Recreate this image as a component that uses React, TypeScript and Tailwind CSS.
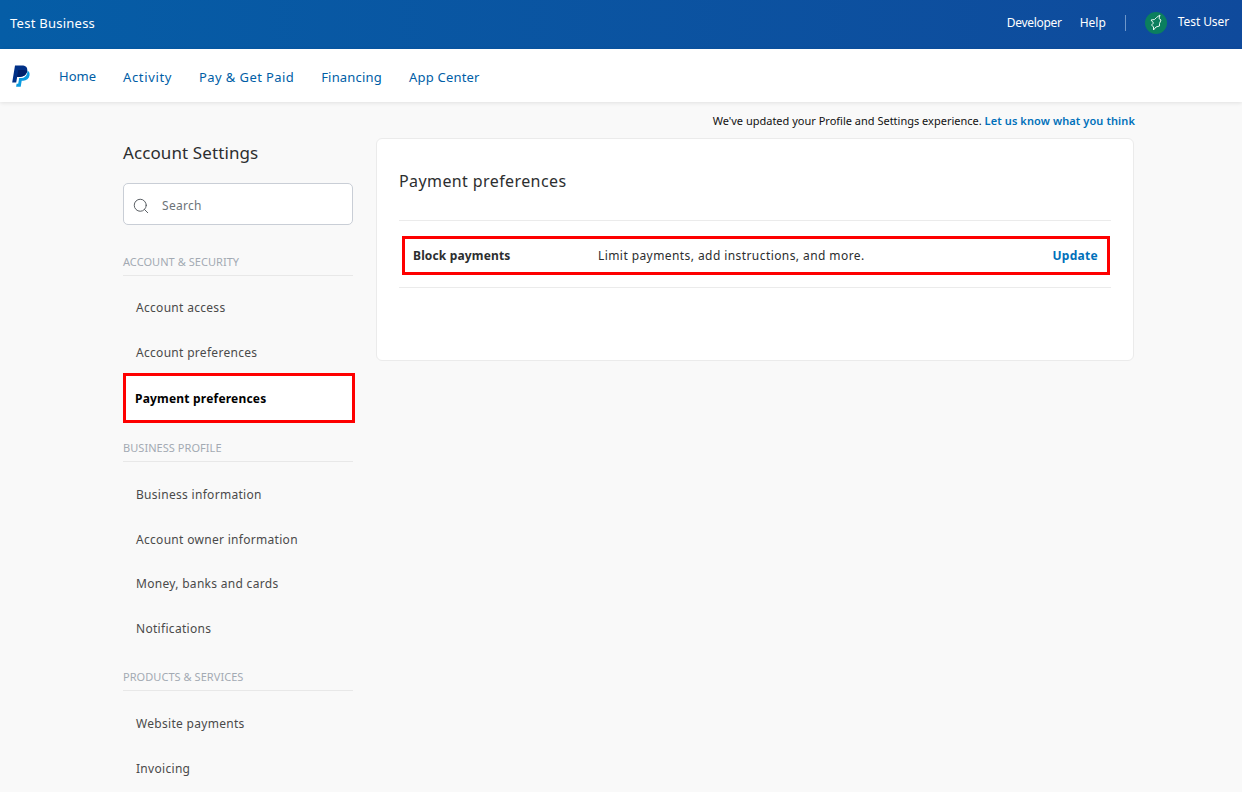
import { Search } from "lucide-react";

const font = { fontFamily: '"Noto Sans", "Open Sans", sans-serif' };

const SectionLabel = ({ label }: { label: string }) => (
  <div className="h-[21px] border-b border-[#e8e8e8] text-[11px] leading-[13px] tracking-[0.05px] text-[#a3aab3]">
    {label}
  </div>
);

const SideItem = ({ label }: { label: string }) => (
  <div className="flex h-[44.6px] items-center pl-[13px] pt-[2px] text-[12px] tracking-[0.3px] text-[#4a4a4a]">{label}</div>
);

const Logo = () => (
  <svg width="19" height="22" viewBox="0 0 19 22">
    <path d="M5.2 17.5H1.2L4 .5h6.8c3.6 0 6 1.6 5.4 5.3-.7 4-3.4 5.9-7.2 5.9H6.2z" fill="#003087" />
    <path d="M16.4 5.6c1.9 1 2.5 2.7 2.1 4.9-.6 3.4-3 5.2-6.3 5.2h-1.5l-1 6H5.1l.5-3h1.6l1-5.7h1.6c3.6 0 6-2 6.5-5.5z" fill="#0a9be0" />
    <path d="M6 12h2.8c3.7 0 6.6-2 7.5-6.2-1-.6-2.4-.9-4-.9H7.2z" fill="#012169" />
  </svg>
);

const Avatar = () => (
  <span className="flex h-[22px] w-[22px] items-center justify-center rounded-full bg-[#0b7f5e]">
    <svg width="14" height="17" viewBox="0 0 14 17" fill="none" stroke="#e6f7f1" strokeWidth="1">
      <path d="M11 1 10 4.5 12 6 10.5 9.5 10.5 12 7 13 4.5 16 4.5 13 2.5 11 4.5 9 2 6 5.5 5.5 7.5 3.5z" />
    </svg>
  </span>
);

export default function App() {
  return (
    <div className="h-[792px] overflow-hidden bg-[#f9f9f9]" style={font}>
      <header className="flex h-[49px] items-center justify-between bg-gradient-to-r from-[#055da6] to-[#0f4a9c] pb-[2px] pl-[10px] pr-[13px] text-white">
        <span className="text-[13px] tracking-[0.25px]">Test Business</span>
        <div className="mb-[2px] flex items-center text-[12px]">
          <a className="tracking-[-0.3px]">Developer</a>
          <a className="ml-[18px]">Help</a>
          <span className="ml-[19px] mr-[19px] h-[16px] w-px bg-[#6f97ca]" />
          <Avatar />
          <span className="ml-[11px] -translate-y-px tracking-[-0.1px]">Test User</span>
        </div>
      </header>

      <nav className="flex h-[53px] items-center bg-white pl-[11px] pt-[1px] shadow-[0_1px_4px_rgba(0,0,0,0.1)]">
        <Logo />
        <div className="ml-[29px] flex items-center gap-[27px] text-[13px] text-[#005ea6]">
          <a className="translate-y-px">Home</a>
          <a className="translate-y-[2px] tracking-[0.65px]">Activity</a>
          <a className="translate-y-[2px] tracking-[0.4px]">Pay &amp; Get Paid</a>
          <a className="translate-y-[2px] tracking-[0.2px]">Financing</a>
          <a className="translate-y-[2px] tracking-[0.2px]">App Center</a>
        </div>
      </nav>

      <p className="mr-[107px] mt-[10px] text-right text-[11px] leading-[18px] text-[#111]">
        We've updated your Profile and Settings experience.{" "}
        <a className="font-semibold tracking-[0.1px] text-[#0070ba]">Let us know what you think</a>
      </p>

      <div className="mt-[8px] flex pl-[123px]">
        <aside className="w-[230px]">
          <h2 className="pt-[3px] text-[17px] leading-[24px] tracking-[0.1px] text-[#2c2e2f]">Account Settings</h2>
          <div className="mt-[18px] flex h-[42px] items-center rounded-[5px] border border-[#c9ced6] bg-white pl-[8px] pt-[3px]">
            <Search size={18} strokeWidth={1.2} className="text-[#4a4f55]" />
            <span className="ml-[12px] text-[12px] tracking-[0.3px] text-[#6c7378]">Search</span>
          </div>
          <div className="mt-[30px]">
            <SectionLabel label="ACCOUNT & SECURITY" />
          </div>
          <div className="mt-[9px]">
            <SideItem label="Account access" />
            <SideItem label="Account preferences" />
          </div>
          <div className="-mt-[1.2px] flex h-[50px] w-[232px] items-center border-[3px] border-[#fe0000] bg-white pl-[9px] pt-[2px] text-[12px] font-bold tracking-[0.2px] text-black">
            Payment preferences
          </div>
          <div className="mt-[18px]">
            <SectionLabel label="BUSINESS PROFILE" />
          </div>
          <div className="mt-[10px]">
            <SideItem label="Business information" />
            <SideItem label="Account owner information" />
            <SideItem label="Money, banks and cards" />
            <SideItem label="Notifications" />
          </div>
          <div className="mt-[19.4px]">
            <SectionLabel label="PRODUCTS & SERVICES" />
          </div>
          <div className="mt-[10px]">
            <SideItem label="Website payments" />
            <SideItem label="Invoicing" />
          </div>
        </aside>

        <main className="ml-[23px] h-[223px] w-[758px] rounded-[6px] border border-[#ebebeb] bg-white px-[22px]">
          <h1 className="pt-[30px] text-[16px] leading-[24px] tracking-[0.4px] text-[#2c2e2f]">Payment preferences</h1>
          <div className="mt-[27px] border-y border-[#ebebeb] pb-[12px] pt-[15px]">
            <div className="ml-[3px] mr-[1px] flex h-[39px] items-center border-[3px] border-[#fe0000] pl-[8px] pr-[9px] text-[12px] tracking-[0.42px] text-[#2c2e2f]">
              <span className="w-[185px] font-bold tracking-[0.15px]">Block payments</span>
              <span>Limit payments, add instructions, and more.</span>
              <a className="ml-auto font-bold tracking-[0.3px] text-[#0070ba]">Update</a>
            </div>
          </div>
        </main>
      </div>
    </div>
  );
}
